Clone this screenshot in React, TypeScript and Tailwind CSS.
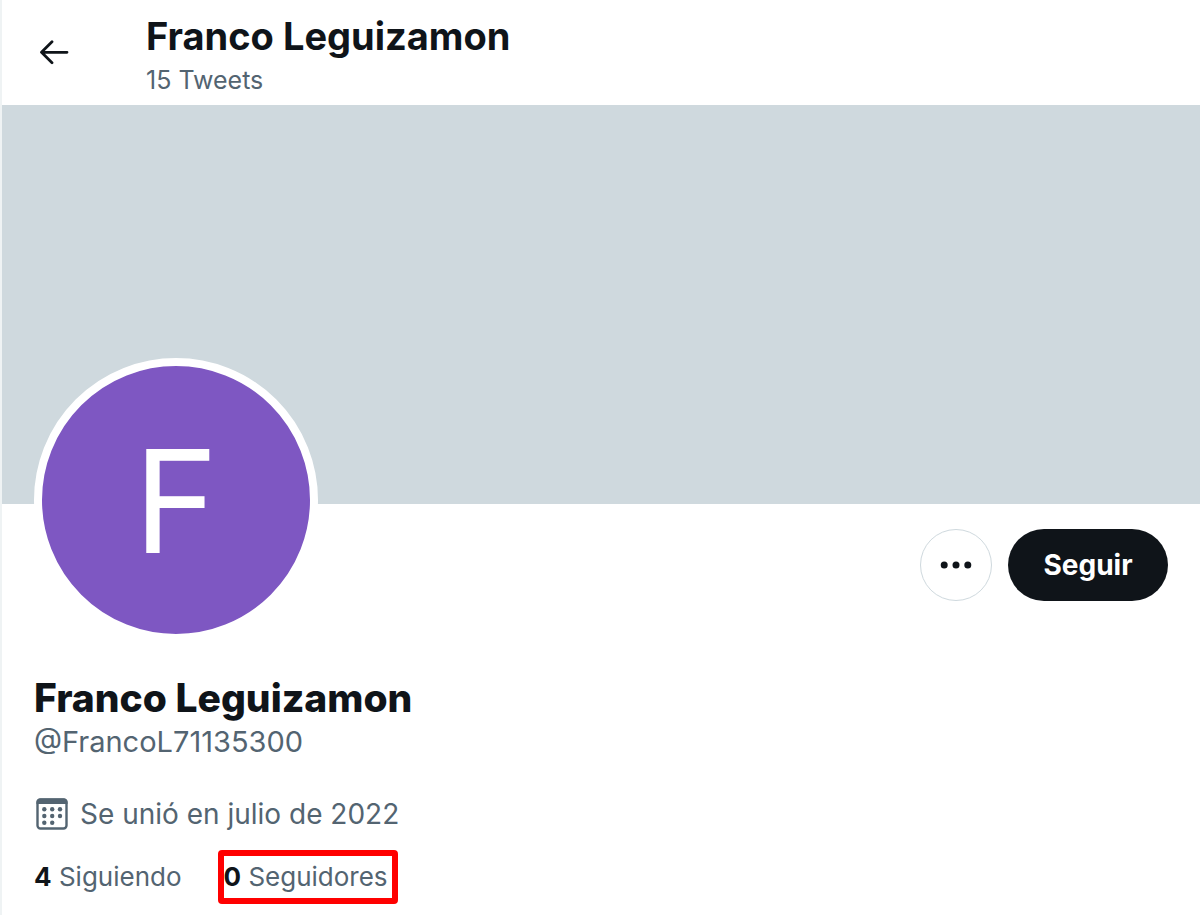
import React from "react";

function BackIcon() {
  return (
    <svg viewBox="0 0 30 26" className="h-[26px] w-[30px]" fill="none" stroke="currentColor" strokeWidth="2.800" strokeLinecap="round" strokeLinejoin="round" aria-hidden="true">
      <path d="M13 1.800 2.500 12.300l10.500 10.500M3 12.300H28" />
    </svg>
  );
}

function MoreIcon() {
  return (
    <svg viewBox="0 0 32 8" className="h-2 w-8" fill="currentColor" aria-hidden="true">
      <circle cx="4.200" cy="4" r="3.500" />
      <circle cx="16" cy="4" r="3.500" />
      <circle cx="27.800" cy="4" r="3.500" />
    </svg>
  );
}

function CalendarIcon() {
  return (
    <svg viewBox="0 0 32 32" className="size-8 shrink-0" fill="currentColor" aria-hidden="true">
      <rect x="1.500" y="1.500" width="29" height="29" rx="3" fill="none" stroke="currentColor" strokeWidth="2.400" />
      <path d="M0.500 6V4a3.500 3.500 0 0 1 3.500-3.500h24A3.500 3.500 0 0 1 31.500 4v2z" />
      <circle cx="8.300" cy="11.300" r="2.200" />
      <circle cx="16.200" cy="11.300" r="2.200" />
      <circle cx="24" cy="11.300" r="2.200" />
      <circle cx="8.300" cy="18" r="2.200" />
      <circle cx="16.200" cy="18" r="2.200" />
      <circle cx="24" cy="18" r="2.200" />
      <circle cx="8.300" cy="24.800" r="2.200" />
      <circle cx="16.200" cy="24.800" r="2.200" />
    </svg>
  );
}

export default function App() {
  return (
    <main className="min-h-screen border-l-2 border-[#eff3f4] bg-white font-['Inter','Liberation_Sans',sans-serif] text-[#0f1419]">
      <header className="flex h-[105px] items-center">
        <button type="button" aria-label="Volver" className="ml-6 flex size-14 items-center justify-center rounded-full">
          <BackIcon />
        </button>
        <div className="ml-16 pt-1">
          <h2 className="text-[38px] leading-[48px] font-bold">Franco Leguizamon</h2>
          <p className="mt-0.5 text-[25px] leading-9 text-[#536471]">15 Tweets</p>
        </div>
      </header>

      <div className="aspect-[3/1] w-full bg-[#cfd9de]" />

      <section className="px-8">
        <div className="flex items-start justify-between">
          <div className="-mt-[146px] flex size-[284px] items-center justify-center rounded-full border-8 border-white bg-[#7e57c2] text-[143px] leading-none text-white">
            F
          </div>
          <div className="mt-[25px] flex gap-4">
            <button type="button" aria-label="Más opciones" className="flex size-[72px] items-center justify-center rounded-full border border-[#cfd9de]">
              <MoreIcon />
            </button>
            <button type="button" className="h-[72px] w-40 rounded-full bg-[#0f1419] text-[28px] font-bold text-white">
              Seguir
            </button>
          </div>
        </div>

        <h1 className="mt-8 text-[39px] leading-[48px] font-extrabold">Franco Leguizamon</h1>
        <p className="text-[29px] leading-10 text-[#536471]">@FrancoL71135300</p>

        <p className="mt-8 flex items-center gap-3 pl-0.5 text-[28px] leading-10 text-[#536471]">
          <CalendarIcon />
          Se unió en julio de 2022
        </p>

        <nav className="mt-4 flex items-center gap-9 text-[26px] leading-[42px] text-[#536471]">
          <a href="#siguiendo">
            <span className="font-bold text-[#0f1419]">4</span> Siguiendo
          </a>
          <a href="#seguidores" className="rounded-sm border-[6px] border-[#ff0000] pr-1">
            <span className="font-bold text-[#0f1419]">0</span> Seguidores
          </a>
        </nav>
      </section>
    </main>
  );
}
